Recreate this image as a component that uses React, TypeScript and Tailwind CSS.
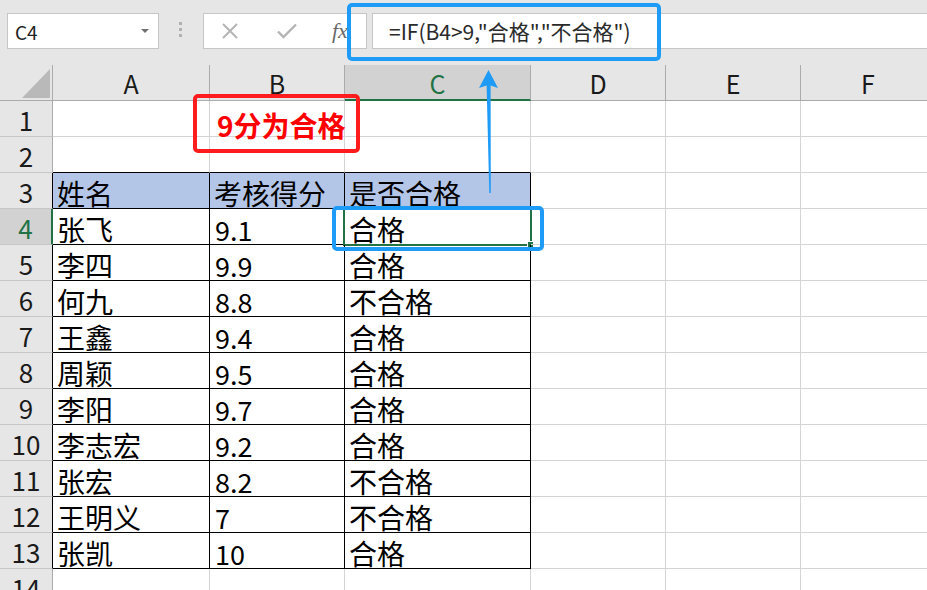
import React from "react";

const colHeads = ["A", "B", "C", "D", "E", "F"];

type Row = [string, string, string];
const data: Record<number, Row> = {
  3: ["姓名", "考核得分", "是否合格"],
  4: ["张飞", "9.1", "合格"],
  5: ["李四", "9.9", "合格"],
  6: ["何九", "8.8", "不合格"],
  7: ["王鑫", "9.4", "合格"],
  8: ["周颖", "9.5", "合格"],
  9: ["李阳", "9.7", "合格"],
  10: ["李志宏", "9.2", "合格"],
  11: ["张宏", "8.2", "不合格"],
  12: ["王明义", "7", "不合格"],
  13: ["张凯", "10", "合格"],
};

function FormulaBar() {
  return (
    <div className="relative flex h-[65px] items-start bg-[#e6e6e6]">
      <div className="ml-[7px] mt-[13px] flex h-[36px] w-[152px] items-center justify-between border border-[#c6c6c6] bg-white pl-[7px] pr-[9px]">
        <span className="text-[19px] leading-none text-[#222]">C4</span>
        <svg width="8" height="5" viewBox="0 0 8 5">
          <polygon points="0,0 8,0 4,4" fill="#707070" />
        </svg>
      </div>
      <div className="ml-[20px] mt-[22px] flex w-[4px] flex-col gap-[3px]">
        <div className="h-[3px] w-[3px] bg-[#b0b0b0]" />
        <div className="h-[3px] w-[3px] bg-[#b0b0b0]" />
        <div className="h-[3px] w-[3px] bg-[#b0b0b0]" />
      </div>
      <div className="ml-[20px] mt-[13px] flex h-[36px] w-[164px] items-center border border-[#c6c6c6] bg-white">
        <svg className="ml-[17px]" width="18" height="16" viewBox="0 0 18 16">
          <path d="M2 1 L16 15 M16 1 L2 15" stroke="#b4b4b4" strokeWidth="2" fill="none" />
        </svg>
        <svg className="ml-[38px]" width="20" height="16" viewBox="0 0 20 16">
          <path d="M1 8.5 L6.5 14 L19 1.5" stroke="#b4b4b4" strokeWidth="2.4" fill="none" />
        </svg>
        <span className="ml-[35px] font-['Liberation_Serif',serif] text-[22px] italic leading-none text-[#6a6a6a]">
          fx
        </span>
      </div>
      <div className="ml-[5px] mt-[13px] flex h-[36px] flex-1 items-center border border-r-0 border-[#c6c6c6] bg-white pl-[16px]">
        <span className="text-[21px] leading-none text-[#2a2a2a]">
          =IF(B4&gt;9,"合格","不合格")
        </span>
      </div>
    </div>
  );
}

function Sheet() {
  const cells: React.ReactNode[] = [];
  cells.push(
    <div key="corner" className="relative border-r border-b border-[#ababab] bg-[#e6e6e6]">
      <svg className="absolute left-0 top-0" width="53" height="36" viewBox="0 0 53 36">
        <polygon points="50,4 50,33 22,33" fill="#b9b9b9" />
      </svg>
    </div>
  );
  colHeads.forEach((h) => {
    const sel = h === "C";
    cells.push(
      <div
        key={"h" + h}
        className={
          sel
            ? "flex items-center justify-center border-r border-b-2 border-r-[#ababab] border-b-[#217346] bg-[#d2d2d2] pt-[2px] text-[25px] leading-none text-[#217346]"
            : "flex items-center justify-center border-r border-b border-[#ababab] bg-[#e6e6e6] pt-[1px] text-[25px] leading-none text-[#1a1a1a]"
        }
      >
        {h}
      </div>
    );
  });

  for (let r = 1; r <= 14; r++) {
    const inTable = r >= 3 && r <= 13;
    let rh =
      "flex items-center justify-center border-b border-b-[#c6c6c6] bg-[#e6e6e6] text-[26px] leading-none text-[#1a1a1a]";
    if (r === 4) {
      rh =
        "flex items-center justify-center border-b border-r-2 border-b-[#c6c6c6] border-r-[#217346] bg-[#d2d2d2] text-[26px] leading-none text-[#217346]";
    } else if (inTable) {
      rh += " border-r border-r-black";
    } else {
      rh += " border-r border-r-[#ababab]";
    }
    cells.push(
      <div key={"r" + r} className={rh}>
        <span className="pt-[2px]">{r}</span>
      </div>
    );
    for (let c = 0; c < 6; c++) {
      const row = data[r];
      const text = row && c < 3 ? row[c] : "";
      const numeric = /^[0-9.]+$/.test(text);
      let cls = numeric
        ? "relative flex items-center overflow-visible pl-[5px] pt-[5px] text-[27px] leading-none text-black whitespace-nowrap"
        : "relative flex items-center overflow-visible pl-[4px] pt-[4px] text-[28px] leading-none text-black whitespace-nowrap";
      if (inTable && c < 3) {
        cls += " border-r border-b border-black";
        if (r === 3) cls += " bg-[#b4c6e7]";
      } else if (r === 2 && c < 3) {
        cls += " border-r border-b border-r-[#d4d4d4] border-b-black";
      } else {
        cls += " border-r border-b border-[#d4d4d4]";
      }
      cells.push(
        <div key={"c" + r + "-" + c} className={cls}>
          {text}
          {r === 4 && c === 2 && (
            <>
              <div className="absolute left-[-2px] right-[-2px] top-0 bottom-[-2px] border-b-2 border-l-2 border-r-2 border-[#217346]" />
              <div className="absolute right-[-4px] bottom-[-4px] h-[7px] w-[7px] border border-white bg-[#217346]" />
            </>
          )}
        </div>
      );
    }
  }

  return (
    <div className="grid grid-cols-[53px_157px_135px_186px_135px_135px_135px] auto-rows-[36px]">
      {cells}
    </div>
  );
}

export default function App() {
  return (
    <div className="relative h-[590px] w-[927px] overflow-hidden bg-white font-['Noto_Sans_CJK_SC','Noto_Sans',sans-serif]">
      <FormulaBar />
      <Sheet />

      <div className="pointer-events-none absolute left-[347px] top-[3px] h-[58px] w-[314px] rounded-[5px] border-4 border-[#1e9bf7]" />
      <div className="pointer-events-none absolute left-[332px] top-[206px] h-[45px] w-[212px] rounded-[5px] border-4 border-[#1e9bf7]" />
      <div className="pointer-events-none absolute left-[193px] top-[94px] flex h-[59px] w-[167px] items-center rounded-[5px] border-4 border-[#ff1c1c] pl-[20px]">
        <span className="pt-[2px] text-[28px] font-bold leading-none text-[#ff0000]">9分为合格</span>
      </div>
      <svg className="pointer-events-none absolute left-0 top-0" width="927" height="590" viewBox="0 0 927 590">
        <polygon
          points="488.5,70 479,88 486.6,85.5 489.3,193 490.8,193 490.6,85.5 498,88"
          fill="#1e9bf7"
        />
      </svg>
    </div>
  );
}
